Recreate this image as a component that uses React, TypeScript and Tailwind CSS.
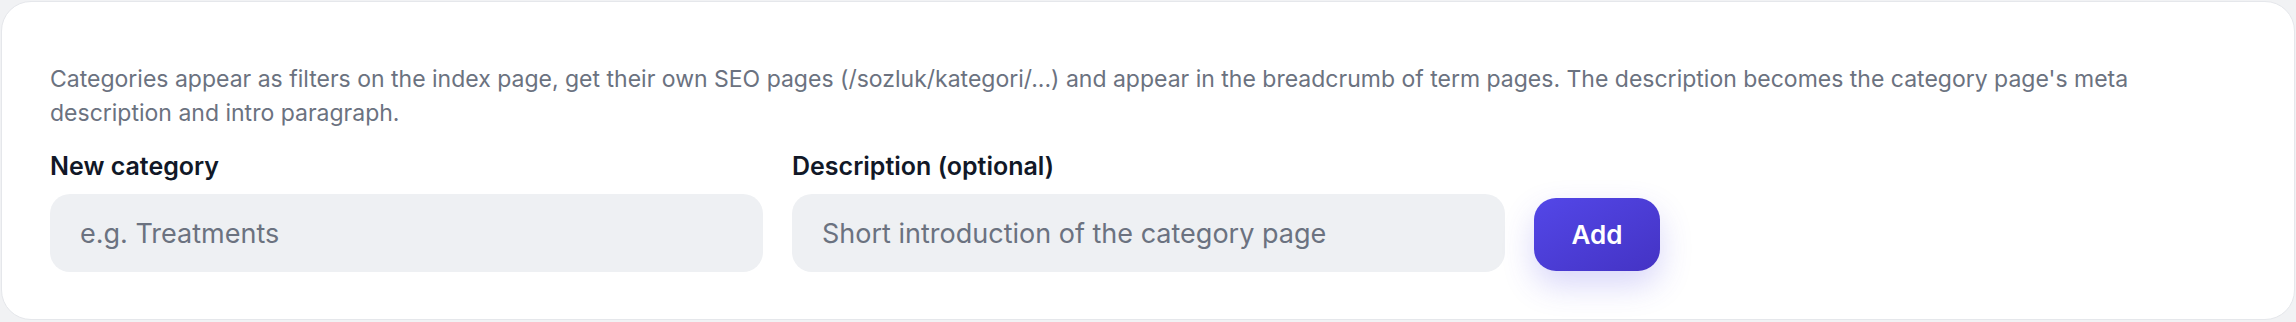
export default function App() {
  return (
    <div className="min-h-[322px] bg-[#f1f2f4] p-[1px] font-['Inter',sans-serif]">
      <div className="rounded-[30px] border border-[#e5e7eb] bg-white px-[48px] pt-[60px] pb-[47px]">
        <p className="text-[23px] leading-[34px] text-[#6b7280]">
          Categories appear as filters on the index page, get their own SEO pages (/sozluk/kategori/...) and appear in
          the breadcrumb of term pages. The description becomes the category page's meta description and intro
          paragraph.
        </p>
        <div className="mt-[18px] flex items-end gap-[29px]">
          <label className="flex flex-col">
            <span className="mb-[10px] text-[25px] font-semibold leading-[36px] text-[#111827]">New category</span>
            <input
              placeholder="e.g. Treatments"
              className="h-[78px] w-[713px] rounded-[20px] bg-[#eef0f3] px-[30px] text-[27px] text-[#111827] outline-none placeholder:text-[#6b7280]"
            />
          </label>
          <label className="flex flex-col">
            <span className="mb-[10px] text-[25px] font-semibold leading-[36px] text-[#111827]">
              Description (optional)
            </span>
            <input
              placeholder="Short introduction of the category page"
              className="h-[78px] w-[713px] rounded-[20px] bg-[#eef0f3] px-[30px] text-[27px] text-[#111827] outline-none placeholder:text-[#6b7280]"
            />
          </label>
          <button className="mb-[1px] h-[73px] w-[126px] rounded-[22px] bg-linear-to-br from-[#5347e8] to-[#4433c4] text-[26px] font-semibold text-white shadow-[0_14px_32px_rgba(79,70,229,0.22)]">
            Add
          </button>
        </div>
      </div>
    </div>
  )
}
